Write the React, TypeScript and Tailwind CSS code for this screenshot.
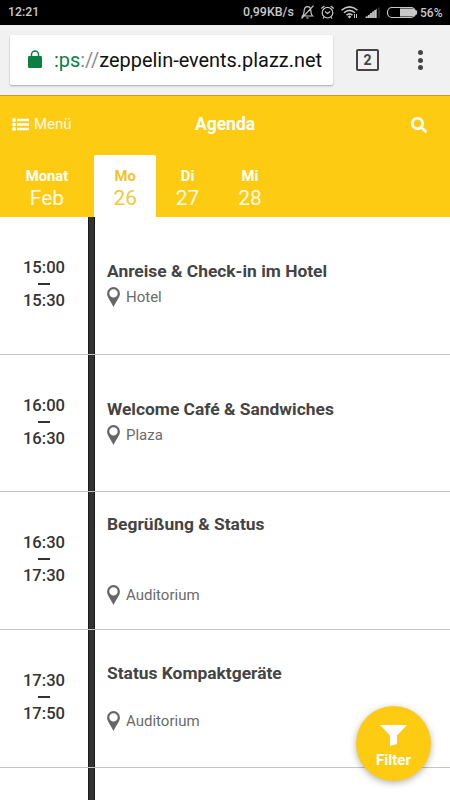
import { FaSearch } from 'react-icons/fa';

type Session = {
  start: string;
  end: string;
  title: string;
  place: string;
  row: string;
  body: string;
  gap: string;
};

const sessions: Session[] = [
  { start: '15:00', end: '15:30', title: 'Anreise & Check-in im Hotel', place: 'Hotel', row: 'h-[138px]', body: 'pt-[44px]', gap: 'mt-[5px]' },
  { start: '16:00', end: '16:30', title: 'Welcome Café & Sandwiches', place: 'Plaza', row: 'h-[137px]', body: 'pt-[44px]', gap: 'mt-[5px]' },
  { start: '16:30', end: '17:30', title: 'Begrüßung & Status', place: 'Auditorium', row: 'h-[138px]', body: 'pt-[22px]', gap: 'mt-[50px]' },
  { start: '17:30', end: '17:50', title: 'Status Kompaktgeräte', place: 'Auditorium', row: 'h-[138px]', body: 'pt-[33px]', gap: 'mt-[27px]' },
];

const days = [
  { name: 'Mo', date: '26', active: true },
  { name: 'Di', date: '27', active: false },
  { name: 'Mi', date: '28', active: false },
];

function StatusBar() {
  return (
    <div className="flex h-[25px] items-center bg-black pl-[8px] text-[12px] font-medium text-[#c8c8c8]">
      <span className="w-[235px] text-[12.300px]">12:21</span>
      <span className="w-[56px] text-[12.400px] whitespace-nowrap">0,99KB/s</span>
      {/* Muted bell, alarm, wifi, signal and battery */}
      <svg className="h-[25px] w-[120px] shrink-0" viewBox="299 0 120 25" fill="none" stroke="#c8c8c8" strokeWidth="1.2">
        <path d="M302.500 16c1.600-1.500 1.500-3 1.600-5 .2-2.800 1.500-4.300 3.400-4.300s3.200 1.500 3.400 4.300c.1 2 0 3.500 1.600 5zM306.300 18h2.400M301.500 18.500L313.500 5.700" />
        <circle cx="327.500" cy="12.700" r="5.300" />
        <path d="M325 11.500l2.500 2 2.700-2M321.300 8.500l3-2.500M333.700 8.500l-3-2.500M324 17l-1 1.500M331 17l1 1.500" />
        <path d="M341.500 10.300q8-6.800 16 0M344 12.800q5.500-4.800 11 0M346.500 15.200q3-2.600 6 0" strokeWidth="1.500" />
        <path d="M349.500 15.200l1.800 1.600-1.800 1.800-1.800-1.800z" fill="#c8c8c8" stroke="none" />
        <path d="M354.500 14v4M356.500 14v4" strokeWidth="1" />
        <path d="M365 18L377 8.500V18z" fill="#8a8a8a" stroke="none" />
        <path d="M366.500 18v-1.500M368.700 18v-3M370.900 18v-5M373.100 18v-6.500M375.300 18v-8" strokeWidth="1.500" />
        <path d="M379 18V7.500" stroke="#333" strokeWidth="1.400" />
        <rect x="387.500" y="7.500" width="28" height="10" rx="4.500" />
        <path d="M400 8.500h12.500a3 3 0 0 1 3 3v2a3 3 0 0 1-3 3H400z" fill="#c8c8c8" stroke="none" />
        <path d="M416.500 10.500v4" />
      </svg>
      <span className="pl-[1px]">56%</span>
    </div>
  );
}

function BrowserBar() {
  return (
    <div className="flex h-[70px] items-start bg-[#f1f1f1] pt-[10px] pl-[10px]">
      <div className="flex h-[50px] w-[323px] items-center rounded-[2px] bg-white pl-[18px] shadow-[0_1px_2px_rgba(0,0,0,0.3)]">
        <svg className="mb-[2px] h-[18px] w-[14px]" viewBox="0 0 14 18">
          <path d="M3.500 7V4.500a3.500 3.500 0 0 1 7 0V7" fill="none" stroke="#0b8043" strokeWidth="1.500" />
          <rect y="6" width="14" height="12" rx="1.200" fill="#0b8043" />
        </svg>
        <span className="ml-[12px] pt-px text-[19.900px] leading-[24px] whitespace-nowrap text-[#111]">
          <span className="text-[#0b8043]">:ps</span>
          <span className="text-[#8b8b8b]">://</span>zeppelin-events.plazz.net
        </span>
      </div>
      <div className="mt-[14px] ml-[23px] flex h-[22px] w-[23px] items-center justify-center rounded-[2px] border-2 border-[#444] text-[14px] font-bold text-[#444]">2</div>
      <div className="mt-[15px] ml-[39px] flex flex-col gap-[2.500px]">
        <i className="size-[5px] rounded-full bg-[#444]" />
        <i className="size-[5px] rounded-full bg-[#444]" />
        <i className="size-[5px] rounded-full bg-[#444]" />
      </div>
    </div>
  );
}

function Header() {
  return (
    <header className="h-[122px] border-t border-[#c09c2b] bg-[#fdcb12] text-white">
      <div className="flex h-[59px] items-center px-[12px] pb-[2px]">
        <div className="flex w-[120px] items-center gap-[5px] text-[15px]">
          <svg className="h-[13px] w-[17px]" viewBox="0 0 17 13" fill="currentColor">
            <circle cx="2" cy="2" r="1.900" />
            <circle cx="2" cy="6.500" r="1.900" />
            <circle cx="2" cy="11" r="1.900" />
            <path d="M5 .7h12v2.600H5zM5 5.200h12v2.600H5zM5 9.700h12v2.600H5z" />
          </svg>
          <span className="text-white/90">Menü</span>
        </div>
        <h1 className="flex-1 text-center text-[17.500px] font-bold">Agenda</h1>
        <div className="flex w-[120px] justify-end pr-[11px]">
          <FaSearch className="size-[16px]" />
        </div>
      </div>
      {/* Month and day picker */}
      <nav className="flex h-[62px] text-center">
        <div className="w-[94px] pt-[12px]">
          <div className="text-[14.800px] leading-[18px] font-bold">Monat</div>
          <div className="text-[21px] leading-[26px] text-white/90">Feb</div>
        </div>
        {days.map((day) => (
          <div
            key={day.name}
            className={`w-[62.400px] rounded-t-[2px] pt-[12px] ${day.active ? 'bg-white text-[#eec42c]' : ''}`}
          >
            <div className="text-[14.800px] leading-[18px] font-bold">{day.name}</div>
            <div className="text-[21px] leading-[26px] opacity-90">{day.date}</div>
          </div>
        ))}
      </nav>
    </header>
  );
}

function SessionRow({ session }: { session: Session }) {
  return (
    <div className={`flex flex-col ${session.row}`}>
      <div className="flex flex-1">
        <div className="flex w-[88px] flex-col items-center pt-[41px] text-[16.600px] leading-[20px] font-medium text-[#333]">
          <span>{session.start}</span>
          <i className="mt-[5px] mb-[6px] h-[2px] w-[12px] bg-[#333]" />
          <span>{session.end}</span>
        </div>
        <div className="w-[7px] border-x border-[#1a1a1a] bg-[#333]" />
        <div className={`flex-1 pl-[12px] ${session.body}`}>
          <h2 className="text-[17.400px] leading-[20px] font-bold text-[#444]">{session.title}</h2>
          <div className={`flex items-center text-[15px] leading-[22px] text-[#6a6a6a] ${session.gap}`}>
            <svg className="mr-[6px] h-[20px] w-[13px]" viewBox="0 0 13 20">
              <path fillRule="evenodd" fill="#666" d="M6.500 0A6.400 6.400 0 0 0 .1 6.500C.1 10.500 3.500 13.500 6.500 20c3-6.500 6.400-9.500 6.400-13.500A6.400 6.400 0 0 0 6.500 0zM6.500 2.200a4.200 4.200 0 1 1 0 8.400 4.200 4.200 0 0 1 0-8.400z" />
            </svg>
            {session.place}
          </div>
        </div>
      </div>
      <div className="h-px bg-[#c4c4c4]" />
    </div>
  );
}

export default function App() {
  return (
    <div className="relative flex h-[800px] w-[450px] flex-col overflow-hidden bg-white font-['Roboto',sans-serif]">
      <StatusBar />
      <BrowserBar />
      <Header />
      <main className="flex flex-1 flex-col">
        {sessions.map((session) => (
          <SessionRow key={session.start} session={session} />
        ))}
        <div className="ml-[88px] w-[7px] flex-1 border-x border-[#1a1a1a] bg-[#333]" />
      </main>

      {/* Floating filter button */}
      <button className="absolute top-[706px] left-[356px] flex size-[75px] flex-col items-center rounded-full bg-[#fdcb12] pt-[19px] text-[15px] leading-[18px] font-bold text-white shadow-[0_2px_7px_rgba(0,0,0,0.3)]">
        <svg className="mb-[5px] h-[21px] w-[27px] shrink-0" viewBox="0 0 27 21" fill="currentColor">
          <path d="M0 0h27L17 10.500V19l-7 2V10.500z" />
        </svg>
        Filter
      </button>
    </div>
  );
}
